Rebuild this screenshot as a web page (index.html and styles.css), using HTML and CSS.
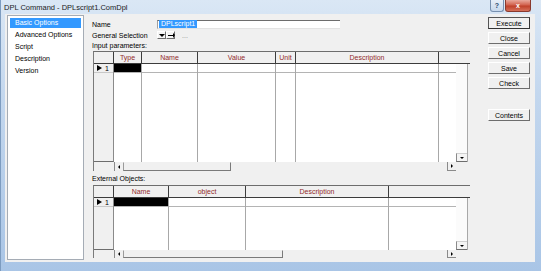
FILE: index.html
```html
<!DOCTYPE html>
<html lang="en">
<head>
    <meta charset="UTF-8">
    <title>DPL Command - DPLscript1.ComDpl</title>
    <link rel="stylesheet" href="styles.css">
</head>
<body>
    <div class="window">
        <div class="titlebar">
            <span class="title">DPL Command - DPLscript1.ComDpl</span>
            <div class="caption-btns">
                <span class="cap-help">?</span>
                <span class="cap-close">x</span>
            </div>
        </div>
        <div class="client">
            <ul class="pages">
                <li class="active">Basic Options</li>
                <li>Advanced Options</li>
                <li>Script</li>
                <li>Description</li>
                <li>Version</li>
            </ul>

            <div class="main">
                <div class="form-row name-row">
                    <label>Name</label>
                    <div class="textbox"><span class="sel">DPLscript1</span></div>
                </div>
                <div class="form-row gen-row">
                    <label>General Selection</label>
                    <span class="mini-btn"><i class="tri-down"></i></span>
                    <span class="mini-btn"><i class="arrow-right"></i></span>
                    <span class="dots">...</span>
                </div>

                <div class="section-label">Input parameters:</div>
                <div class="grid grid-input">
                    <div class="grid-head">
                        <div class="hc"></div>
                        <div class="hc">Type</div>
                        <div class="hc">Name</div>
                        <div class="hc">Value</div>
                        <div class="hc">Unit</div>
                        <div class="hc">Description</div>
                        <div class="hc last"></div>
                    </div>
                    <div class="grid-body">
                        <div class="cols">
                            <div class="col rh"><div class="cell"><i class="tri-right"></i>1</div></div>
                            <div class="col"><div class="cell sel"></div></div>
                            <div class="col"><div class="cell"></div></div>
                            <div class="col"><div class="cell"></div></div>
                            <div class="col"><div class="cell"></div></div>
                            <div class="col"><div class="cell"></div></div>
                            <div class="col last"><div class="cell"></div></div>
                        </div>
                        <div class="vscroll">
                            <div class="vs-btn top"><i class="tri-up"></i></div>
                            <div class="vs-track"></div>
                            <div class="vs-btn bottom"><i class="tri-down sm"></i></div>
                        </div>
                    </div>
                    <div class="hscroll">
                        <div class="hs-rh"></div>
                        <div class="hs-btn left"><i class="tri-left"></i></div>
                        <div class="hs-thumb thumb-input"></div>
                        <div class="hs-space"></div>
                        <div class="hs-btn right"><i class="tri-right sm"></i></div>
                        <div class="hs-corner"></div>
                    </div>
                </div>

                <div class="section-label ext">External Objects:</div>
                <div class="grid grid-ext">
                    <div class="grid-head">
                        <div class="hc"></div>
                        <div class="hc">Name</div>
                        <div class="hc">object</div>
                        <div class="hc">Description</div>
                        <div class="hc last"></div>
                    </div>
                    <div class="grid-body">
                        <div class="cols">
                            <div class="col rh"><div class="cell"><i class="tri-right"></i>1</div></div>
                            <div class="col"><div class="cell sel"></div></div>
                            <div class="col"><div class="cell"></div></div>
                            <div class="col"><div class="cell"></div></div>
                            <div class="col last"><div class="cell"></div></div>
                        </div>
                        <div class="vscroll">
                            <div class="vs-btn top"><i class="tri-up"></i></div>
                            <div class="vs-track"></div>
                            <div class="vs-btn bottom"><i class="tri-down sm"></i></div>
                        </div>
                    </div>
                    <div class="hscroll">
                        <div class="hs-rh"></div>
                        <div class="hs-btn left"><i class="tri-left"></i></div>
                        <div class="hs-thumb thumb-ext"></div>
                        <div class="hs-space"></div>
                        <div class="hs-btn right"><i class="tri-right sm"></i></div>
                        <div class="hs-corner"></div>
                    </div>
                </div>
            </div>

            <div class="buttons">
                <button class="default">Execute</button>
                <button>Close</button>
                <button>Cancel</button>
                <button>Save</button>
                <button>Check</button>
                <button class="contents">Contents</button>
            </div>
        </div>
    </div>
</body>
</html>
```

FILE: styles.css
```css
* {
    box-sizing: border-box;
}
html, body {
    margin: 0;
}
body {
    font-family: "Liberation Sans", Arial, sans-serif;
    font-size: 7px;
    color: #000;
    background: #fff;
}
.window {
    width: 541px;
    height: 271px;
    display: flex;
    flex-direction: column;
    background: linear-gradient(180deg, #dae7f5 0%, #c3d7ee 35%, #a9c5e6 100%);
    border-left: 1px solid #7d9cc0;
}

/* title bar */
.titlebar {
    height: 14px;
    display: flex;
    align-items: center;
    padding-left: 3px;
}
.title {
    font-size: 7.5px;
    color: #1b1b1b;
}
.caption-btns {
    margin-left: auto;
    margin-right: 10px;
    align-self: flex-start;
    display: flex;
    gap: 1px;
}
.cap-help, .cap-close {
    height: 12px;
    display: flex;
    align-items: center;
    justify-content: center;
    border: 1px solid #7790b0;
    border-top: none;
    border-radius: 0 0 3px 3px;
    font-size: 7px;
    font-weight: bold;
}
.cap-help {
    width: 14px;
    color: #2c4a6e;
    background: linear-gradient(180deg, #e6eef8, #c7d8ec);
}
.cap-close {
    width: 26px;
    color: #fff;
    border-color: #8a3a2e;
    background: linear-gradient(180deg, #e9a99c 0%, #d2634f 45%, #c0412a 55%, #d5705a 100%);
}

/* client area */
.client {
    flex: 1;
    margin: 0 6px 9px 4px;
    background: #f0f0f0;
    display: flex;
}
.pages {
    list-style: none;
    margin: 1px 0 2px 2px;
    padding: 2px;
    width: 77px;
    background: #fff;
    border: 1px solid #a5acb5;
}
.pages li {
    height: 10px;
    line-height: 10px;
    margin-bottom: 2px;
    padding-left: 5px;
}
.pages li.active {
    background: #3399ff;
    color: #fff;
}

.main {
    width: 378px;
    margin-left: 8px;
    padding-top: 5px;
}
.form-row {
    display: flex;
    align-items: center;
}
.name-row {
    height: 10px;
}
.gen-row {
    height: 12px;
}
.form-row label {
    width: 65px;
}
.textbox {
    width: 183px;
    height: 9px;
    background: #fff;
    border-top: 1px solid #6d6d6d;
    border-left: 1px solid #a0a0a0;
    border-bottom: 1px solid #e3e3e3;
    padding-left: 1px;
    display: flex;
    align-items: center;
}
.sel {
    background: #3399ff;
    color: #fff;
    line-height: 8px;
    padding: 0 2px;
}
.mini-btn {
    width: 9px;
    height: 8px;
    margin-right: 0;
    background: #f4f4f4;
    border: 1px solid;
    border-color: #fff #6d6d6d #6d6d6d #fff;
    display: flex;
    align-items: center;
    justify-content: center;
}
.dots {
    margin-left: 7px;
    color: #8a8a8a;
}
.section-label {
    height: 10px;
    line-height: 10px;
}
.section-label.ext {
    height: 14px;
    padding-top: 2px;
    line-height: 12px;
}

/* small arrows */
i {
    display: block;
    width: 0;
    height: 0;
}
.tri-down {
    border-left: 3px solid transparent;
    border-right: 3px solid transparent;
    border-top: 3px solid #000;
}
.tri-down.sm, .tri-up {
    border-left-width: 2px;
    border-right-width: 2px;
}
.tri-down.sm {
    border-top-width: 2px;
}
.tri-up {
    border-bottom: 2px solid #000;
}
.tri-left {
    border-top: 2px solid transparent;
    border-bottom: 2px solid transparent;
    border-right: 2px solid #000;
}
.tri-right {
    border-top: 3px solid transparent;
    border-bottom: 3px solid transparent;
    border-left: 5px solid #000;
    margin-right: 3px;
}
.tri-right.sm {
    border-top-width: 2px;
    border-bottom-width: 2px;
    border-left-width: 2px;
    margin-right: 0;
}
.arrow-right {
    width: 5px;
    height: 1px;
    background: #000;
    position: relative;
}
.arrow-right::after {
    content: "";
    position: absolute;
    right: -2px;
    top: -2px;
    border-top: 2px solid transparent;
    border-bottom: 3px solid transparent;
    border-left: 2px solid #000;
}

/* data grids */
.grid {
    margin-left: 1px;
    width: 377px;
    border-left: 1px solid #7a7a7a;
    border-top: 1px solid #6d6d6d;
    display: flex;
    flex-direction: column;
}
.grid-input {
    height: 120px;
}
.grid-ext {
    height: 73px;
}
.grid-input .grid-head, .grid-input .cols {
    grid-template-columns: 20px 28px 56px 78px 20px 143px 1fr;
}
.grid-ext .grid-head, .grid-ext .cols {
    grid-template-columns: 20px 55px 77px 143px 1fr;
}
.grid-head {
    display: grid;
    height: 12px;
    border-bottom: 1px solid #3c3c3c;
}
.hc {
    border-right: 1px solid #3c3c3c;
    color: #922b2b;
    text-align: center;
    line-height: 11px;
}
.hc.last {
    border-right: none;
}
.grid-body {
    flex: 1;
    display: flex;
    min-height: 0;
}
.cols {
    flex: 1;
    display: grid;
}
.col {
    background: #fff;
    border-right: 1px solid #a8a8a8;
}
.col.last {
    border-right: none;
}
.col.rh {
    background: #f0f0f0;
    border-right: 1px solid #8a8a8a;
    border-bottom: 1px solid #6d6d6d;
}
.cell {
    height: 9px;
    border-bottom: 1px solid #b4b4b4;
}
.cell.sel {
    background: #000;
}
.rh .cell {
    display: flex;
    align-items: center;
    padding-left: 3px;
    border-bottom-color: #c8c8c8;
}
.vscroll {
    width: 12px;
    margin-right: 2px;
    display: flex;
    flex-direction: column;
    background: #fbfbfb;
    border-right: 1px solid #a8a8a8;
}
.vs-btn {
    height: 9px;
    display: flex;
    align-items: center;
    justify-content: center;
}
.vs-btn.bottom {
    border-left: 1px solid #8a8a8a;
    border-top: 1px solid #d0d0d0;
    border-bottom: 1px solid #6d6d6d;
    background: #f4f4f4;
}
.vs-track {
    flex: 1;
}
.hscroll {
    display: flex;
    height: 9px;
}
.grid-ext .hscroll {
    height: 8px;
}
.hs-rh {
    width: 20px;
}
.hs-btn {
    width: 9px;
    display: flex;
    align-items: center;
    justify-content: center;
}
.hs-btn.left {
    border-left: 1px solid #8a8a8a;
}
.hs-btn.right {
    border-left: 1px solid #8a8a8a;
    border-bottom: 1px solid #8a8a8a;
}
.hs-thumb {
    border: 1px solid;
    border-color: #f0f0f0 #7a7a7a #7a7a7a #9a9a9a;
}
.thumb-input {
    width: 108px;
}
.thumb-ext {
    width: 160px;
}
.hs-space {
    flex: 1;
}
.hs-corner {
    width: 14px;
}

/* command buttons */
.buttons {
    width: 42px;
    margin-left: 18px;
    padding-top: 3px;
    display: flex;
    flex-direction: column;
    gap: 3px;
}
.buttons button {
    height: 12px;
    padding: 0;
    font-family: "Liberation Sans", Arial, sans-serif;
    font-size: 7px;
    color: #000;
    background: #f0f0f0;
    border: 1px solid;
    border-color: #fff #6d6d6d #6d6d6d #fff;
}
.buttons button.default {
    border-color: #555 #333 #333 #555;
}
.buttons button.contents {
    margin-top: 17px;
}
```
